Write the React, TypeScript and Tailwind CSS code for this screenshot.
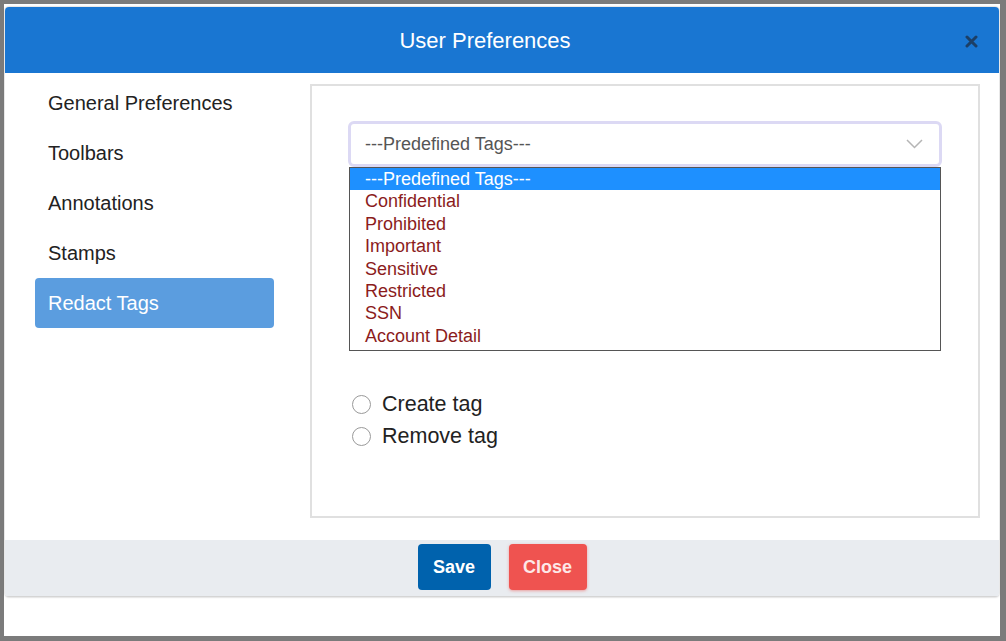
import { useState } from 'react'

const menu = ['General Preferences', 'Toolbars', 'Annotations', 'Stamps', 'Redact Tags']
const tags = [
  '---Predefined Tags---',
  'Confidential',
  'Prohibited',
  'Important',
  'Sensitive',
  'Restricted',
  'SSN',
  'Account Detail',
]

export default function App() {
  const [active, setActive] = useState('Redact Tags')
  const [mode, setMode] = useState('')

  return (
    <div
      className="w-[1006px] h-[641px] bg-[#7b7b7b] pt-[4px] pl-[4px] pr-[6px] pb-[5px] overflow-hidden"
      style={{ fontFamily: '"Liberation Sans", Arial, sans-serif' }}
    >
      <div className="w-full h-full bg-white pt-[3px] pl-[1px] pr-[1px]">
        <div className="flex flex-col h-[590px] bg-white rounded-[4px] shadow-[0_0_2px_rgba(0,0,0,0.35)] overflow-hidden">
          {/* header */}
          <div className="relative flex items-center justify-center h-[66px] bg-[#1976d2] shrink-0 pr-[34px]">
            <h1 className="text-[22px] text-white">User Preferences</h1>
            <button className="absolute right-[20px] top-[25px] w-[16px] h-[18px] flex items-center justify-center">
              <svg width="13" height="13" viewBox="0 0 13 13">
                <path d="M2 2 L11 11 M11 2 L2 11" stroke="#1c3f66" strokeWidth="3" strokeLinecap="round" />
              </svg>
            </button>
          </div>

          {/* body */}
          <div className="flex flex-1 min-h-0">
            <div className="w-[305px] shrink-0 pl-[30px] pt-[5px]">
              {menu.map((m) => (
                <div
                  key={m}
                  onClick={() => setActive(m)}
                  className={
                    'w-[239px] h-[50px] flex items-center pl-[13px] text-[20px] cursor-pointer rounded-[4px] ' +
                    (active === m ? 'bg-[#5b9ddf] text-white' : 'text-[#222]')
                  }
                >
                  {m}
                </div>
              ))}
            </div>

            <div className="flex-1 pt-[11px] pr-[19px] pb-[22px]">
              <div className="h-full border-2 border-[#e0e0e0] px-[36px] pt-[35px]">
                <div className="relative h-[46px] rounded-[6px] border-[3px] border-[#dcd9f4] bg-white flex items-center pl-[14px]">
                  <span className="text-[18px] text-[#555]">---Predefined Tags---</span>
                  <svg className="absolute right-[16px] top-[15px]" width="17" height="10" viewBox="0 0 17 10">
                    <path d="M1 1 L8.5 8.5 L16 1" fill="none" stroke="#b5b5b5" strokeWidth="1.5" />
                  </svg>
                  <div className="absolute left-[-2px] right-[-2px] top-[43px] border border-[#555] bg-white z-10 pb-[3px]">
                    {tags.map((t, i) => (
                      <div
                        key={t}
                        className={
                          'h-[22.4px] leading-[22.4px] pl-[15px] text-[18px] ' +
                          (i === 0 ? 'bg-[#1e90ff] text-white' : 'text-[#8b1c1c]')
                        }
                      >
                        {t}
                      </div>
                    ))}
                  </div>
                </div>

                <div className="mt-[225px] pl-[4px] flex flex-col gap-[8px]">
                  {['Create tag', 'Remove tag'].map((l) => (
                    <label key={l} className="flex items-center gap-[11px] h-[24px] cursor-pointer" onClick={() => setMode(l)}>
                      <span className="w-[19px] h-[19px] rounded-full border border-[#9a9a9a] bg-white flex items-center justify-center">
                        {mode === l && <span className="w-[9px] h-[9px] rounded-full bg-[#1976d2]" />}
                      </span>
                      <span className="text-[21.5px] text-[#222]">{l}</span>
                    </label>
                  ))}
                </div>
              </div>
            </div>
          </div>

          {/* footer */}
          <div className="h-[57px] shrink-0 bg-[#e9ecf0] border-b border-[#d5d5d5] flex items-start pt-[4px] justify-center gap-[18px]">
            <button className="w-[73px] h-[46px] rounded-[4px] bg-[#0062ad] text-white text-[18px] font-bold">Save</button>
            <button className="w-[78px] h-[46px] rounded-[4px] bg-[#ef5350] text-[#fde8e8] text-[18px] font-bold shadow-[0_1px_3px_rgba(239,83,80,0.5)]">
              Close
            </button>
          </div>
        </div>
      </div>
    </div>
  )
}
